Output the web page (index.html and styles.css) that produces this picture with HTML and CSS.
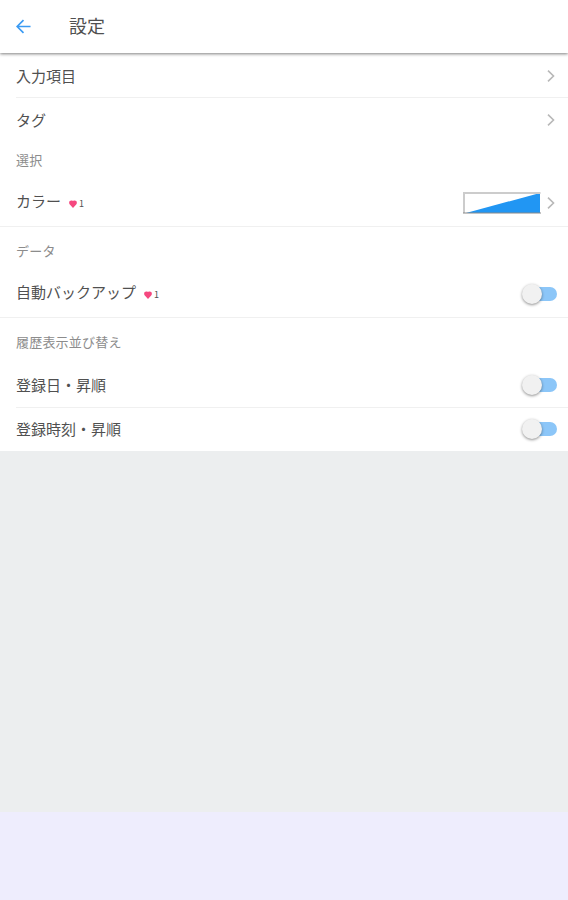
FILE: index.html
```html
<!DOCTYPE html>
<html lang="ja">
<head>
    <meta charset="UTF-8">
    <meta name="viewport" content="width=device-width, initial-scale=1.0">
    <title>設定</title>
    <link rel="stylesheet" href="styles.css">
</head>
<body>
    <header class="header">
        <svg class="back" viewBox="0 0 16 16"><path d="M15.5 8H1.5M8 1.2L1.2 8L8 14.8"/></svg>
        <h1>設定</h1>
    </header>

    <main class="settings">
        <div class="row inset">
            <span class="label">入力項目</span>
            <svg class="chevron" viewBox="0 0 8 12"><path d="M1 0.7L6.5 6L1 11.3"/></svg>
        </div>
        <div class="row">
            <span class="label">タグ</span>
            <svg class="chevron" viewBox="0 0 8 12"><path d="M1 0.7L6.5 6L1 11.3"/></svg>
        </div>

        <h2 class="first">選択</h2>
        <div class="row full">
            <span class="label">カラー</span>
            <span class="cost"><svg viewBox="0 0 8 8"><path d="M4 8L0.8 4.5C-0.8 2.4 0.6-0.3 4 0.9C7.4-0.3 8.8 2.4 7.2 4.5Z"/></svg>1</span>
            <svg class="ramp" viewBox="0 0 78 22"><path class="ramp-fill" d="M3 21L77 1V21Z"/><path class="ramp-edge" d="M1 21V1H77.5"/><path class="ramp-base" d="M0 21H78"/></svg>
            <svg class="chevron" viewBox="0 0 8 12"><path d="M1 0.7L6.5 6L1 11.3"/></svg>
        </div>

        <h2>データ</h2>
        <div class="row full">
            <span class="label">自動バックアップ</span>
            <span class="cost"><svg viewBox="0 0 8 8"><path d="M4 8L0.8 4.5C-0.8 2.4 0.6-0.3 4 0.9C7.4-0.3 8.8 2.4 7.2 4.5Z"/></svg>1</span>
            <span class="toggle"></span>
        </div>

        <h2 class="sort">履歴表示並び替え</h2>
        <div class="row inset">
            <span class="label">登録日・昇順</span>
            <span class="toggle"></span>
        </div>
        <div class="row">
            <span class="label">登録時刻・昇順</span>
            <span class="toggle"></span>
        </div>
    </main>

    <footer class="banner"></footer>
</body>
</html>
```

FILE: styles.css
```css
* {
    box-sizing: border-box;
}

body {
    display: flex;
    flex-direction: column;
    height: 900px;
    margin: 0;
    background-color: #eceeef;
    color: #505050;
    font-family: "Noto Sans CJK JP", sans-serif;
}

.header {
    display: flex;
    align-items: center;
    height: 53px;
    padding-left: 16px;
    background-color: #fff;
    box-shadow: 0 1px 3px rgba(0, 0, 0, 0.5);
    z-index: 1;
}

.header h1 {
    margin: 0 0 3px 38px;
    font-size: 18px;
    font-weight: 400;
    line-height: 26px;
}

svg {
    display: block;
    fill: none;
}

.back {
    width: 15px;
    height: 15px;
    stroke: #3b9bf3;
    stroke-width: 1.8;
}

.settings {
    padding-top: 1px;
    background-color: #fff;
}

.row {
    position: relative;
    display: flex;
    align-items: center;
    height: 44px;
    padding: 0 11px 0 16px;
}

.row.full {
    height: 48px;
    border-bottom: 1px solid #f0f0f0;
}

.row.full .label {
    margin-bottom: 3px;
}

.row.inset::after {
    content: "";
    position: absolute;
    right: 0;
    bottom: 0;
    left: 16px;
    height: 1px;
    background-color: #f0f0f0;
}

.row.inset:has(.toggle)::after {
    bottom: -1px;
}

.label {
    font-size: 15px;
    line-height: 22px;
}

h2 {
    height: 43px;
    margin: 0;
    padding: 13px 16px 0;
    color: #8c8c8c;
    font-size: 13px;
    font-weight: 400;
    letter-spacing: 0.2px;
    line-height: 22px;
}

h2.first {
    height: 37px;
    padding-top: 7px;
}

h2.sort {
    height: 45px;
}

.chevron {
    width: 8px;
    height: 12px;
    margin-left: auto;
    margin-right: 2px;
    stroke: #b8b8b8;
    stroke-width: 1.6;
}

.cost {
    display: flex;
    align-items: center;
    gap: 2px;
    margin: 2px 0 0 8px;
    font-size: 9px;
    line-height: 12px;
}

.cost svg {
    width: 8px;
    height: 8px;
    fill: #f5487f;
}

.ramp {
    width: 78px;
    height: 22px;
    margin-top: 1px;
    margin-left: auto;
}

.ramp + .chevron {
    margin-left: 6px;
}

.ramp-fill {
    fill: #2196f3;
}

.ramp-edge {
    stroke: #ccc;
    stroke-width: 2;
}

.ramp-base {
    stroke: #888;
}

.toggle {
    position: relative;
    width: 32px;
    height: 14px;
    margin-left: auto;
    border-radius: 7px;
    background-color: #8cc6f8;
}

.toggle::before {
    content: "";
    position: absolute;
    top: -3px;
    left: -3px;
    width: 20px;
    height: 20px;
    border-radius: 50%;
    background-color: #f1f1f1;
    box-shadow: 0 1px 3px rgba(0, 0, 0, 0.45);
}

.banner {
    height: 88px;
    margin-top: auto;
    background-color: #eeedfd;
}
```
